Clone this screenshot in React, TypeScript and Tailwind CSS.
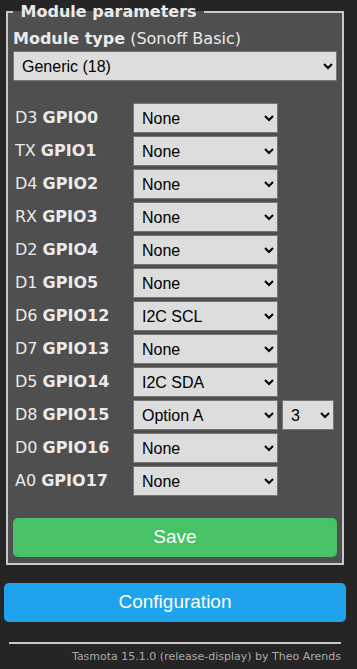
import React from "react";

type Pin = { pin: string; gpio: string; value: string; extra?: string };

const pins: Pin[] = [
  { pin: "D3", gpio: "GPIO0", value: "None" },
  { pin: "TX", gpio: "GPIO1", value: "None" },
  { pin: "D4", gpio: "GPIO2", value: "None" },
  { pin: "RX", gpio: "GPIO3", value: "None" },
  { pin: "D2", gpio: "GPIO4", value: "None" },
  { pin: "D1", gpio: "GPIO5", value: "None" },
  { pin: "D6", gpio: "GPIO12", value: "I2C SCL" },
  { pin: "D7", gpio: "GPIO13", value: "None" },
  { pin: "D5", gpio: "GPIO14", value: "I2C SDA" },
  { pin: "D8", gpio: "GPIO15", value: "Option A", extra: "3" },
  { pin: "D0", gpio: "GPIO16", value: "None" },
  { pin: "A0", gpio: "GPIO17", value: "None" },
];

const selectCls =
  "h-[30px] bg-[#dddddd] text-black border border-[#767676] p-[4px] font-['Liberation_Sans',Arial,sans-serif] text-[16px]";

export default function App() {
  return (
    <div className="min-h-screen bg-[#252525] text-[#eaeaea] font-['Verdana','DejaVu_Sans',sans-serif] text-[16px]">
      <div className="w-[342px] ml-[4px]">
        <fieldset className="mx-[2px] border-2 border-[#c8c8c8] bg-[#4f4f4f] px-[5px] pb-[6px]">
          <legend className="px-[2px] font-bold">&nbsp;Module parameters&nbsp;</legend>

          {/* Module type */}
          <div className="pt-[3px]">
            <b>Module type</b> (Sonoff Basic)
          </div>
          <select className={selectCls + " w-full"} defaultValue="Generic (18)">
            <option>Generic (18)</option>
          </select>

          {/* GPIO table */}
          <div className="mt-[22px] flex flex-col gap-[3px]">
            {pins.map((p) => (
              <div key={p.gpio} className="flex items-center">
                <div className="w-[120px] pl-[2px]">
                  {p.pin} <b>{p.gpio}</b>
                </div>
                <select className={selectCls + " w-[145px]"} defaultValue={p.value}>
                  <option>{p.value}</option>
                </select>
                {p.extra && (
                  <select className={selectCls + " w-[52px] ml-[4px]"} defaultValue={p.extra}>
                    <option>{p.extra}</option>
                  </select>
                )}
              </div>
            ))}
          </div>

          <button className="mt-[22px] w-full h-[39px] rounded-[5px] bg-[#47c266] text-[#faffff] text-[19px] font-['Liberation_Sans',Arial,sans-serif]">
            Save
          </button>
        </fieldset>

        <button className="mt-[18px] w-full h-[39px] rounded-[5px] bg-[#1fa3ec] text-[#faffff] text-[19px] font-['Liberation_Sans',Arial,sans-serif]">
          Configuration
        </button>

        <div className="mt-[20px] mx-[5px] text-right text-[11px]">
          <div className="h-[2px] bg-[#c8c8c8]" />
          <div className="mt-[5px] text-[#aaaaaa]">Tasmota 15.1.0 (release-display) by Theo Arends</div>
        </div>
      </div>
    </div>
  );
}
